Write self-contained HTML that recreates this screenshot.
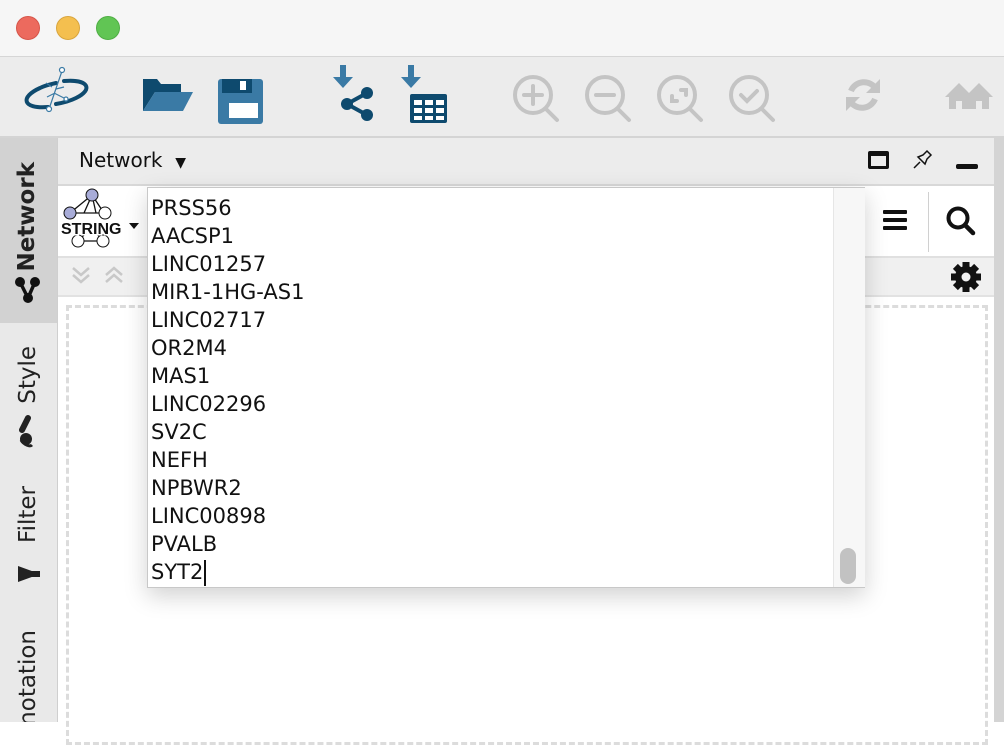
<!DOCTYPE html>
<html><head><style>
body{margin:0;width:1004px;height:722px;overflow:hidden;background:#fff;font-family:"DejaVu Sans","Liberation Sans",sans-serif;position:relative}
.a{position:absolute}
.vt{position:absolute;writing-mode:vertical-rl;transform:rotate(180deg);font-size:23px;color:#222;white-space:nowrap}
.list div{height:28px;line-height:28px;font-size:21px;color:#111;padding-left:3px}
</style></head><body>
<div class="a" style="left:0;top:0;width:1004px;height:56px;background:#f6f6f6;border-bottom:1px solid #d6d6d6"></div>
<div class="a" style="left:16px;top:16px;width:24px;height:24px;border-radius:50%;background:#ec6a5e;border:1px solid #d65549;box-sizing:border-box"></div>
<div class="a" style="left:56px;top:16px;width:24px;height:24px;border-radius:50%;background:#f4bf4f;border:1px solid #d9a53d;box-sizing:border-box"></div>
<div class="a" style="left:96px;top:16px;width:24px;height:24px;border-radius:50%;background:#61c554;border:1px solid #4fae44;box-sizing:border-box"></div>
<div class="a" style="left:0;top:57px;width:1004px;height:79px;background:#ececec;border-bottom:2px solid #d4d4d4"></div>
<svg class="a" style="left:0;top:57px" width="1004" height="79">
 <g fill="none" stroke="#0e4a6e" stroke-width="4" stroke-linecap="round">
  <path d="M48 50 C22 52 20 40 40 31 C46 28 52 27 56 26"/>
  <path d="M64 24 C88 22 94 32 76 41 C70 44 62 46 56 47"/>
 </g>
 <g stroke="#3a7aa5" stroke-width="1.2" fill="#fff"><path d="M49 52 L62 14 M54 36 L66 42 M52 30 L46 26 M56 32 L64 30 M55 36 L47 40" /><circle cx="62" cy="13" r="2.5"/><circle cx="49" cy="52" r="2.5"/><circle cx="66" cy="42" r="2"/></g>
 <path d="M143 22 h14 l4 5 h20 v8 h-26 l-12 19 z" fill="#0e4a6e"/><path d="M155 35 h38 l-10 19 h-40 z" fill="#3a7aa5"/>
 <rect x="218" y="22" width="45" height="45" rx="3" fill="#3a7aa5"/><rect x="222" y="22" width="30" height="14" fill="#0e4a6e"/><rect x="240" y="24" width="6" height="9" fill="#fff"/><rect x="229" y="46" width="29" height="15" fill="#fff"/>
 <path d="M340 8 h6 v12 h7 l-10 11 l-10 -11 h7z" fill="#3a7aa5"/><g fill="#0e4a6e"><circle cx="367" cy="36" r="6"/><circle cx="347" cy="47" r="6"/><circle cx="367" cy="58" r="6"/></g><path d="M367 36 L347 47 L367 58" stroke="#0e4a6e" stroke-width="4" fill="none"/>
 <path d="M408 8 h6 v12 h7 l-10 11 l-10 -11 h7z" fill="#3a7aa5"/><rect x="410" y="37" width="37" height="29" rx="2" fill="#0e4a6e"/><g fill="#fff"><rect x="414" y="43" width="8" height="5"/><rect x="425" y="43" width="8" height="5"/><rect x="436" y="43" width="8" height="5"/><rect x="414" y="51" width="8" height="5"/><rect x="425" y="51" width="8" height="5"/><rect x="436" y="51" width="8" height="5"/><rect x="414" y="59" width="8" height="4"/><rect x="425" y="59" width="8" height="4"/><rect x="436" y="59" width="8" height="4"/></g>
 <g fill="none" stroke="#c4c4c4" stroke-width="4" stroke-linecap="round">
  <circle cx="533" cy="38" r="18"/><path d="M546 52 l11 11"/><path d="M533 29v18M524 38h18"/>
  <circle cx="605" cy="38" r="18"/><path d="M618 52 l11 11"/><path d="M596 38h18"/>
  <circle cx="677" cy="38" r="18"/><path d="M690 52 l11 11"/><path d="M672 39v5h5M681 33h5v5"/>
  <circle cx="749" cy="38" r="18"/><path d="M762 52 l11 11"/><path d="M741 38l6 6l10-10"/>
 </g>
 <g fill="none" stroke="#c4c4c4" stroke-width="6"><path d="M876 32 a14 14 0 0 0 -25 2"/><path d="M850 44 a14 14 0 0 0 25 -2"/></g>
 <path d="M880 22 v14 h-14z M846 54 v-14 h14z" fill="#c4c4c4"/>
 <path d="M945 40 l14 -14 l14 14 h-4 v12 h-7 v-8 h-6 v8 h-7 v-12z M965 40 l14 -14 l14 14 h-4 v12 h-7 v-8 h-6 v8 h-7 v-12z" fill="#c4c4c4"/>
</svg>
<div class="a" style="left:0;top:138px;width:57px;height:584px;background:#e9e9e9;border-right:1px solid #cfcfcf;overflow:hidden">
 <div class="a" style="left:0;top:0;width:57px;height:185px;background:#d2d2d2"></div>
 <div class="vt" style="left:14px;top:24px;font-weight:bold">Network</div>
 <svg class="a" style="left:14px;top:136px" width="28" height="32"><g fill="#111"><circle cx="6" cy="8" r="5"/><circle cx="21" cy="8" r="5"/><circle cx="14" cy="24" r="5"/></g><path d="M6 8 L14 24 L21 8" stroke="#111" stroke-width="3.5" fill="none"/></svg>
 <div class="vt" style="left:15px;top:208px">Style</div>
 <svg class="a" style="left:12px;top:276px" width="32" height="34"><path d="M16 4 L10 16" stroke="#222" stroke-width="6" stroke-linecap="round"/><ellipse cx="14" cy="25" rx="6" ry="6" fill="#222"/><path d="M9 26 C12 31 18 33 20 31" stroke="#222" stroke-width="3" fill="none"/></svg>
 <div class="vt" style="left:15px;top:348px">Filter</div>
 <svg class="a" style="left:16px;top:426px" width="28" height="26"><path d="M2 2 L24 10 L2 18 Z" fill="#222"/><rect x="2" y="7" width="22" height="6" fill="#222"/></svg>
 <div class="vt" style="left:15px;top:492px">Annotation</div>
</div>
<div class="a" style="left:58px;top:138px;width:936px;height:46px;background:#ececec;border-bottom:2px solid #d8d8d8"></div>
<div class="a" style="left:79px;top:148px;font-size:20px;color:#111">Network&nbsp;&nbsp;<span style="font-size:14px">▼</span></div>
<div class="a" style="left:868px;top:151px;width:21px;height:18px;border:3px solid #111;border-top-width:5px;border-radius:2px;box-sizing:border-box"></div>
<svg class="a" style="left:910px;top:148px" width="26" height="24"><path d="M4 20 L10 14 M8 9 L15 16 L17 11 L21 7 L17 3 L13 7 L8 9 Z" fill="none" stroke="#111" stroke-width="1.5"/></svg>
<div class="a" style="left:956px;top:164px;width:22px;height:5px;background:#111;border-radius:2px"></div>
<div class="a" style="left:994px;top:138px;width:10px;height:584px;background:#d4d4d4"></div>
<div class="a" style="left:58px;top:186px;width:936px;height:70px;background:#fff;border-bottom:2px solid #e0e0e0"></div>
<svg class="a" style="left:58px;top:186px" width="90" height="70">
 <g stroke="#111" stroke-width="1.3" fill="none"><path d="M34 9 L12 27 L46 27 L34 9 L26 27 M34 9 L38 27"/><path d="M20 55 L45 55 M28 47 L20 55 M38 47 L45 55"/></g>
 <circle cx="34" cy="9" r="6" fill="#a8acd8" stroke="#111"/><circle cx="12" cy="27" r="6" fill="#a8acd8" stroke="#111"/><circle cx="47" cy="27" r="6" fill="#fff" stroke="#111"/>
 <circle cx="20" cy="55" r="6" fill="#fff" stroke="#111"/><circle cx="45" cy="55" r="6" fill="#fff" stroke="#111"/>
 <text x="3" y="48" font-family="Liberation Sans" font-weight="bold" font-size="16" fill="#111" stroke="#fff" stroke-width="3" paint-order="stroke">STRING</text>
 <path d="M71 37 h10 l-5 6z" fill="#111"/>
</svg>
<div class="a" style="left:232px;top:210px;font-size:21px;color:#ececec">1RL1 SOCS3 LIF S100A8 L...</div>
<div class="a" style="left:883px;top:210px;width:24px;height:4px;background:#111;box-shadow:0 8px 0 #111,0 16px 0 #111;border-radius:1px"></div>
<div class="a" style="left:928px;top:192px;width:1px;height:60px;background:#d0d0d0"></div>
<svg class="a" style="left:944px;top:204px" width="34" height="34"><circle cx="14" cy="14" r="9.5" fill="none" stroke="#111" stroke-width="4"/><path d="M21 21 l8 8" stroke="#111" stroke-width="4.5" stroke-linecap="round"/></svg>
<div class="a" style="left:58px;top:258px;width:936px;height:37px;background:#f0f0f0;border-bottom:2px solid #e2e2e2"></div>
<svg class="a" style="left:66px;top:262px" width="70" height="30"><g fill="none" stroke="#c8c8c8" stroke-width="2.5"><path d="M7 6 l8 7 l8 -7 M7 13 l8 7 l8 -7"/><path d="M40 13 l8 -7 l8 7 M40 20 l8 -7 l8 7"/></g></svg>
<svg class="a" style="left:950px;top:261px" width="32" height="32"><g fill="#111" transform="translate(16 16)"><circle r="11"/><g><rect x="-3.5" y="-15" width="7" height="30"/><rect x="-3.5" y="-15" width="7" height="30" transform="rotate(45)"/><rect x="-3.5" y="-15" width="7" height="30" transform="rotate(90)"/><rect x="-3.5" y="-15" width="7" height="30" transform="rotate(135)"/></g><circle r="4.5" fill="#f0f0f0"/></g></svg>
<div class="a" style="left:66px;top:305px;width:922px;height:440px;border:3px dashed #dcdcdc;box-sizing:border-box"></div>
<div class="a" style="left:147px;top:187px;width:718px;height:401px;background:#fff;border:1px solid #c8c8c8;box-sizing:border-box;box-shadow:0 8px 22px rgba(0,0,0,0.18)">
 <div class="a" style="left:685px;top:0;width:31px;height:399px;background:#f7f7f7;border-left:1px solid #e6e6e6"></div>
 <div class="a" style="left:692px;top:360px;width:16px;height:36px;background:#c2c2c2;border-radius:8px"></div>
 <div class="list a" style="left:0;top:6px">
  <div>PRSS56</div><div>AACSP1</div><div>LINC01257</div><div>MIR1-1HG-AS1</div><div>LINC02717</div><div>OR2M4</div><div>MAS1</div><div>LINC02296</div><div>SV2C</div><div>NEFH</div><div>NPBWR2</div><div>LINC00898</div><div>PVALB</div><div>SYT2<span style="border-left:2px solid #111;margin-left:1px;font-size:0;display:inline-block;height:26px;vertical-align:middle"></span></div>
 </div>
</div>
</body></html>
